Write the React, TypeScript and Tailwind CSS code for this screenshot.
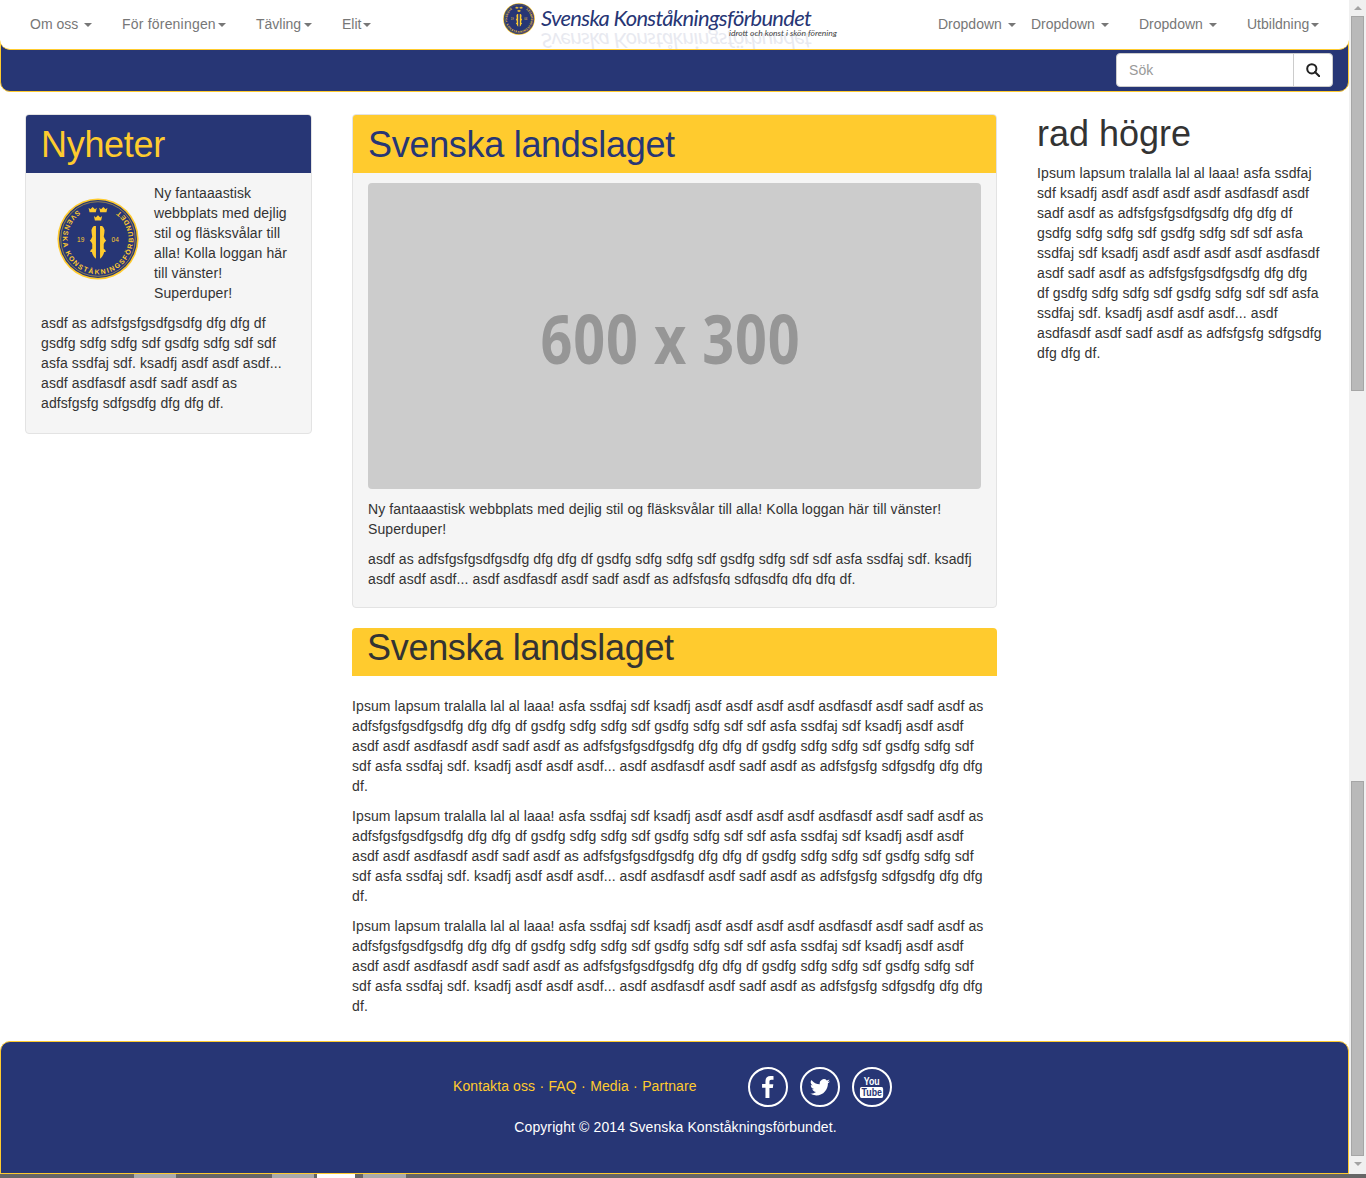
const FONT = "font-['Liberation_Sans',Arial,sans-serif]";

const navLeft = [
  { label: "Om oss", width: "w-[92px] tracking-normal", pad: "pl-[30px]", gap: "ml-[6px]" },
  { label: "För föreningen", width: "w-[134px] tracking-[0.2px]", pad: "pl-[30px]", gap: "ml-[2px]" },
  { label: "Tävling", width: "w-[86px] tracking-normal", pad: "pl-[30px]", gap: "ml-[3px]" },
  { label: "Elit", width: "w-[60px] tracking-normal", pad: "pl-[30px]", gap: "ml-[2px]" },
];

const navRight = [
  { label: "Dropdown", width: "w-[93px] tracking-normal", gap: "ml-[6px]" },
  { label: "Dropdown", width: "w-[108px] tracking-normal", gap: "ml-[6px]" },
  { label: "Dropdown", width: "w-[108px] tracking-normal", gap: "ml-[6px]" },
  { label: "Utbildning", width: "w-[88px] tracking-normal", gap: "ml-[2px]" },
];

const ipsum =
  "Ipsum lapsum tralalla lal al laaa! asfa ssdfaj sdf ksadfj asdf asdf asdf asdf asdfasdf asdf sadf asdf as adfsfgsfgsdfgsdfg dfg dfg df gsdfg sdfg sdfg sdf gsdfg sdfg sdf sdf asfa ssdfaj sdf ksadfj asdf asdf asdf asdf asdfasdf asdf sadf asdf as adfsfgsfgsdfgsdfg dfg dfg df gsdfg sdfg sdfg sdf gsdfg sdfg sdf sdf asfa ssdfaj sdf. ksadfj asdf asdf asdf... asdf asdfasdf asdf sadf asdf as adfsfgsfg sdfgsdfg dfg dfg df.";

function Caret() {
  return <span className="inline-block w-0 h-0 align-middle border-x-[4px] border-t-[4px] border-x-transparent border-t-[#777]" />;
}

function NavItem({ label, className, gap }: { label: string; className: string; gap: string }) {
  return (
    <a className={`block text-[14px] leading-[20px] text-[#777] whitespace-nowrap ${className}`}>
      {label}
      <span className={gap}>
        <Caret />
      </span>
    </a>
  );
}

function Crown({ x, y }: { x: number; y: number }) {
  return (
    <path
      transform={`translate(${x} ${y})`}
      d="M-5 -3 l2.200 1.800 L0 -4 l2.800 2.800 L5 -3 l-1.200 5.500 h-7.600z"
      fill="#ffcb2e"
    />
  );
}

// logo seal, text runs counter clockwise with the tops towards the centre
function Seal({ size, id }: { size: number; id: string }) {
  return (
    <svg width={size} height={size} viewBox="0 0 100 100" className="block">
      <defs>
        <path id={id} d="M 25.300 14.800 A 43 43 0 1 0 74.700 14.800" />
      </defs>
      <circle cx="50" cy="50" r="49.500" fill="#ffcb2e" />
      <circle cx="50" cy="50" r="47.500" fill="#273675" />
      <circle cx="50" cy="50" r="45.500" fill="none" stroke="#ffcb2e" strokeWidth="0.6" />
      <text fontSize="8.500" fill="#ffcb2e" fontFamily="Liberation Sans" fontWeight="700" textLength="216">
        <textPath href={`#${id}`} textLength="216">SVENSKA KONSTÅKNINGSFÖRBUNDET</textPath>
      </text>
      <Crown x={43.500} y={15} />
      <Crown x={56.500} y={15} />
      <Crown x={50} y={25} />
      <path d="M45 34 h2.500 v40 q-4 -3 -5 -8 l-2 0 q0 -3 2.500 -4 v-6 q-1 -3 -3 -4 q2 -2 3 -5 q-1 -5 -1 -8 q1 -4 3 -5z" fill="#ffcb2e" />
      <path d="M55 34 h-2.500 v40 q4 -3 5 -8 l2 0 q0 -3 -2.500 -4 v-6 q1 -3 3 -4 q-2 -2 -3 -5 q1 -5 1 -8 q-1 -4 -3 -5z" fill="#ffcb2e" />
      <text x="29" y="54" fontSize="8" fill="#ffcb2e" fontFamily="Liberation Sans" textAnchor="middle">19</text>
      <text x="71" y="54" fontSize="8" fill="#ffcb2e" fontFamily="Liberation Sans" textAnchor="middle">04</text>
    </svg>
  );
}

function Logo() {
  return (
    <div className="relative w-[345px] h-[50px] overflow-hidden">
      <div className="absolute left-[5px] top-[3px]">
        <Seal size={32} id="sealSmall" />
      </div>
      <div className="absolute left-[43px] top-[3px] text-[22px] leading-[30px] italic tracking-[-0.7px] text-[#273675] whitespace-nowrap font-['Lato',sans-serif]">
        Svenska Konståkningsförbundet
      </div>
      <div className="absolute left-[43px] top-[26px] text-[22px] leading-[30px] italic tracking-[-0.7px] text-[#273675] opacity-10 whitespace-nowrap font-['Lato',sans-serif] -scale-y-100">
        Svenska Konståkningsförbundet
      </div>
      <div className="absolute left-[231px] top-[27px] text-[8.500px] leading-[12px] italic tracking-normal text-[#444] whitespace-nowrap font-['Lato',sans-serif]">
        idrott och konst i skön förening
      </div>
    </div>
  );
}

function SocialCircle({ children }: { children: React.ReactNode }) {
  return (
    <div className="w-[40px] h-[40px] rounded-full border-[2px] border-white flex items-center justify-center">
      {children}
    </div>
  );
}

export default function App() {
  return (
    <div className={`flex w-[1366px] h-[1178px] overflow-hidden bg-white text-[14px] leading-[20px] tracking-[0.1px] text-[#333] ${FONT}`}>
      <div className="relative w-[1349px] shrink-0 flex flex-col">
        <header className="h-[92px] shrink-0 bg-[#273675] border border-[#ffcb2e] rounded-b-[10px] relative">
          <div className="absolute -left-px -right-px -top-px h-[50px] bg-white rounded-b-[10px] border-b border-[#ffcb2e] flex items-start">
            <div className="flex pt-[14px] w-[498px]">
              {navLeft.map((n) => (
                <NavItem key={n.label} label={n.label} gap={n.gap} className={`${n.width} ${n.pad}`} />
              ))}
            </div>
            <Logo />
            <div className="flex pt-[14px] ml-[95px]">
              {navRight.map((n, i) => (
                <NavItem key={i} label={n.label} gap={n.gap} className={n.width} />
              ))}
            </div>
          </div>
          <div className="absolute right-[15px] top-[52px] flex">
            <div className="w-[178px] h-[34px] bg-white rounded-l-[4px] border border-[#ccc] px-[12px] py-[6px] text-[#999]">Sök</div>
            <div className="w-[40px] h-[34px] bg-white rounded-r-[4px] border border-[#ccc] -ml-px flex items-center justify-center">
              <svg width="14" height="14" viewBox="0 0 14 14" fill="none" stroke="#222" strokeWidth="2">
                <circle cx="5.800" cy="5.800" r="4.600" />
                <path d="M9 9l4.300 4.300" strokeLinecap="round" />
              </svg>
            </div>
          </div>
        </header>

        <main className="flex flex-1 items-start pt-[22px]">
          <aside className="w-[287px] ml-[25px] shrink-0 bg-[#f5f5f5] border border-[#e3e3e3] rounded-[4px]">
            <h2 className="h-[58px] bg-[#273675] text-[#ffcb2e] text-[36px] leading-[60px] tracking-[-0.3px] pl-[15px] rounded-t-[3px]">Nyheter</h2>
            <div className="pt-[10px] px-[15px] pb-[20px]">
              <div className="flex">
                <div className="w-[113px] shrink-0 pl-[16px] pt-[15px]">
                  <Seal size={82} id="sealBig" />
                </div>
                <p className="mb-[10px]">
                  Ny fantaaastisk webbplats med dejlig stil og fläsksvålar till alla! Kolla loggan här till vänster! Superduper!
                </p>
              </div>
              <p>asdf as adfsfgsfgsdfgsdfg dfg dfg df gsdfg sdfg sdfg sdf gsdfg sdfg sdf sdf asfa ssdfaj sdf. ksadfj asdf asdf asdf... asdf asdfasdf asdf sadf asdf as adfsfgsfg sdfgsdfg dfg dfg df.</p>
            </div>
          </aside>

          <section className="w-[645px] ml-[40px] shrink-0">
            <div className="bg-[#f5f5f5] border border-[#e3e3e3] rounded-[4px]">
              <h2 className="h-[58px] bg-[#ffcb2e] text-[#273675] text-[36px] leading-[60px] tracking-[-0.3px] pl-[15px] rounded-t-[3px]">Svenska landslaget</h2>
              <div className="h-[434px] px-[15px] pt-[10px] overflow-hidden">
                <div className="h-[306px] bg-[#ccc] rounded-[4px] flex items-center justify-center pt-[4px] pr-[9px]">
                  <span className="text-[68px] font-bold tracking-[1px] text-[#969696] font-['Open_Sans',sans-serif] scale-x-[0.82] whitespace-nowrap">600 x 300</span>
                </div>
                <p className="mt-[10px] mb-[10px]">Ny fantaaastisk webbplats med dejlig stil og fläsksvålar till alla! Kolla loggan här till vänster! Superduper!</p>
                <p className="h-[36px] overflow-hidden">asdf as adfsfgsfgsdfgsdfg dfg dfg df gsdfg sdfg sdfg sdf gsdfg sdfg sdf sdf asfa ssdfaj sdf. ksadfj asdf asdf asdf... asdf asdfasdf asdf sadf asdf as adfsfgsfg sdfgsdfg dfg dfg df.</p>
              </div>
            </div>
            <h2 className="mt-[20px] h-[48px] bg-[#ffcb2e] text-[#333] text-[36px] leading-[40px] tracking-[-0.3px] pl-[15px] rounded-t-[4px]">Svenska landslaget</h2>
            <div className="mt-[20px] pr-[10px]">
              {[0, 1, 2].map((i) => (
                <p key={i} className="mb-[10px]">{ipsum}</p>
              ))}
            </div>
          </section>

          <aside className="w-[286px] ml-[40px] shrink-0">
            <h2 className="text-[36px] leading-[40px] tracking-normal mb-[9px]">rad högre</h2>
            <p>Ipsum lapsum tralalla lal al laaa! asfa ssdfaj sdf ksadfj asdf asdf asdf asdf asdfasdf asdf sadf asdf as adfsfgsfgsdfgsdfg dfg dfg df gsdfg sdfg sdfg sdf gsdfg sdfg sdf sdf asfa ssdfaj sdf ksadfj asdf asdf asdf asdf asdfasdf asdf sadf asdf as adfsfgsfgsdfgsdfg dfg dfg df gsdfg sdfg sdfg sdf gsdfg sdfg sdf sdf asfa ssdfaj sdf. ksadfj asdf asdf asdf... asdf asdfasdf asdf sadf asdf as adfsfgsfg sdfgsdfg dfg dfg df.</p>
          </aside>
        </main>

        <footer className="h-[133px] shrink-0 mb-[4px] bg-[#273675] border border-[#ffcb2e] rounded-t-[10px] flex flex-col items-center">
          <div className="flex items-center pt-[25px] h-[65px] ml-[-4px]">
            <div className="text-[#ffcb2e] w-[295px] mb-[2px]">
              Kontakta oss <span className="mx-[0.3px]">·</span> FAQ <span className="mx-[0.3px]">·</span> Media <span className="mx-[0.3px]">·</span> Partnare
            </div>
            <div className="flex gap-[12px]">
              <SocialCircle>
                <svg width="12" height="22" viewBox="0 0 14 26" fill="white"><path d="M4 26V14H0V9.500h4V6c0-4 2.400-6 6-6 1.700 0 3 .1 3.500.2v4.200h-2.500c-1.900 0-2.300.9-2.300 2.300v3h4.600l-.6 4.500h-4V26z" /></svg>
              </SocialCircle>
              <SocialCircle>
                <svg width="20" height="17" viewBox="0 0 24 20" fill="white"><path d="M24 2.400a10 10 0 0 1-2.800.8A5 5 0 0 0 23.300.5a10 10 0 0 1-3.100 1.200 4.900 4.900 0 0 0-8.400 4.500A14 14 0 0 1 1.700.9a4.900 4.900 0 0 0 1.500 6.600 5 5 0 0 1-2.200-.6v.1a4.900 4.900 0 0 0 3.900 4.800 5 5 0 0 1-2.200.1 4.900 4.900 0 0 0 4.600 3.400A10 10 0 0 1 0 17.300 14 14 0 0 0 7.500 19.500c9 0 14-7.500 14-14v-.6A10 10 0 0 0 24 2.400z" /></svg>
              </SocialCircle>
              <SocialCircle>
                <div className="flex flex-col items-center font-bold text-[11px] leading-[11px] tracking-normal scale-x-[0.8]">
                  <span className="text-white">You</span>
                  <span className="bg-white text-[#273675] rounded-[2px] px-[2px]">Tube</span>
                </div>
              </SocialCircle>
            </div>
          </div>
          <p className="text-white mt-[10px] ml-[2px]">Copyright © 2014 Svenska Konståkningsförbundet.</p>
        </footer>
        <div className="absolute left-0 right-0 bottom-0 h-[4px] bg-[#666] flex">
          <div className="ml-[134px] w-[42px] bg-[#aaa]" />
          <div className="ml-[96px] w-[42px] bg-[#aaa]" />
          <div className="ml-[3px] w-[38px] bg-white" />
          <div className="ml-[8px] w-[43px] bg-[#aaa]" />
        </div>
      </div>

      <div className="w-[17px] shrink-0 h-full bg-[#f0f0f0] flex flex-col relative">
        <div className="h-[16px] flex items-center justify-center">
          <span className="w-0 h-0 border-x-[4px] border-b-[4px] border-x-transparent border-b-[#a3a3a3]" />
        </div>
        <div className="ml-[2px] mr-[2px] h-[375px] bg-[#b9b9b9] border border-[#a6a6a6]" />
        <div className="h-[390px]" />
        <div className="ml-[2px] mr-[2px] h-[375px] bg-[#b9b9b9] border border-[#a6a6a6]" />
        <div className="h-[16px] flex items-center justify-center">
          <span className="w-0 h-0 border-x-[4px] border-t-[4px] border-x-transparent border-t-[#a3a3a3]" />
        </div>
        <div className="absolute left-0 right-0 bottom-0 h-[4px] bg-[#666]" />
      </div>
    </div>
  );
}
